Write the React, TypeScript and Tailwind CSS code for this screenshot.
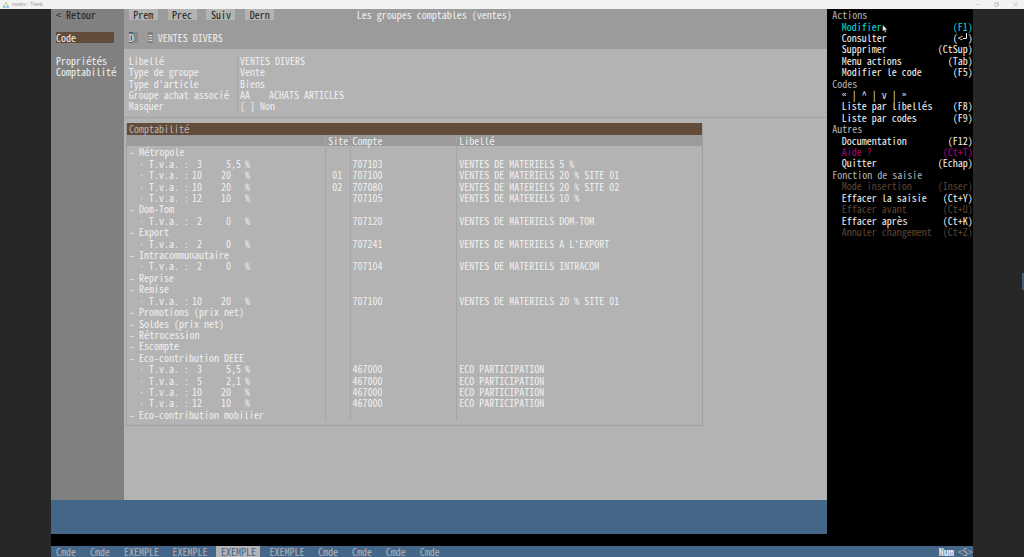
import React from "react";

type Line = {
  title?: string;
  code?: string;
  rate?: string;
  site?: string;
  account?: string;
  label?: string;
};

const lines: Line[] = [
  { title: "Métropole" },
  { code: "3", rate: " 5,5", account: "707103", label: "VENTES DE MATERIELS 5 %" },
  { code: "10", rate: "20", site: "01", account: "707100", label: "VENTES DE MATERIELS 20 % SITE 01" },
  { code: "10", rate: "20", site: "02", account: "707080", label: "VENTES DE MATERIELS 20 % SITE 02" },
  { code: "12", rate: "10", account: "707105", label: "VENTES DE MATERIELS 10 %" },
  { title: "Dom-Tom" },
  { code: "2", rate: " 0", account: "707120", label: "VENTES DE MATERIELS DOM-TOM" },
  { title: "Export" },
  { code: "2", rate: " 0", account: "707241", label: "VENTES DE MATERIELS A L'EXPORT" },
  { title: "Intracommunautaire" },
  { code: "2", rate: " 0", account: "707104", label: "VENTES DE MATERIELS INTRACOM" },
  { title: "Reprise" },
  { title: "Remise" },
  { code: "10", rate: "20", account: "707100", label: "VENTES DE MATERIELS 20 % SITE 01" },
  { title: "Promotions (prix net)" },
  { title: "Soldes (prix net)" },
  { title: "Rétrocession" },
  { title: "Escompte" },
  { title: "Eco-contribution DEEE" },
  { code: "3", rate: " 5,5", account: "467000", label: "ECO PARTICIPATION" },
  { code: "5", rate: " 2,1", account: "467000", label: "ECO PARTICIPATION" },
  { code: "10", rate: "20", account: "467000", label: "ECO PARTICIPATION" },
  { code: "12", rate: "10", account: "467000", label: "ECO PARTICIPATION" },
  { title: "Eco-contribution mobilier" },
];

const fields: [string, React.ReactNode][] = [
  ["Libellé", "VENTES DIVERS"],
  ["Type de groupe", "Vente"],
  ["Type d'article", "Biens"],
  [
    "Groupe achat associé",
    <span className="flex">
      <span className="w-[calc(var(--c)*6)]">AA</span>ACHATS ARTICLES
    </span>,
  ],
  ["Masquer", "[ ] Non"],
];

type Tone = "normal" | "active" | "help" | "off";

const tones: Record<Tone, string> = {
  normal: "text-[#f0f0f0]",
  active: "text-[#00dcd8]",
  help: "text-[#b80074]",
  off: "text-[#5a4435]",
};

function Action({ name, keys, tone = "normal" }: { name: string; keys: React.ReactNode; tone?: Tone }) {
  return (
    <button
      type="button"
      disabled={tone === "off"}
      className={`flex h-(--r) w-full items-center justify-between pl-[calc(var(--c)*3)] ${tones[tone]}`}
    >
      <span className="relative">
        {name}
        {tone === "active" && (
          <svg viewBox="0 0 10 14" className="absolute left-full top-1 h-2 w-1.5" aria-hidden="true">
            <path d="M1 0v11l2.6-2.4L5.6 13l1.8-.8-1.9-4.1H9z" fill="#fff" stroke="#222" strokeWidth=".6" />
          </svg>
        )}
      </span>
      <span>{keys}</span>
    </button>
  );
}

function Heading({ children }: { children: React.ReactNode }) {
  return <h2 className="flex h-(--r) items-center pl-(--c) text-[#b3b3b3]">{children}</h2>;
}

function Tab({ children, on = false }: { children: string; on?: boolean }) {
  const width = children === "Cmde" ? "w-[calc(var(--c)*7)]" : "w-[calc(var(--c)*10)]";
  return (
    <a
      href="#"
      className={`flex h-full items-center pl-(--c) ${width} ${on ? "text-[#446688]" : "text-[#b3b3b3]"}`}
    >
      {on ? (
        <span className="-ml-(--c) flex h-full w-[calc(var(--c)*9)] items-center bg-[#b3b3b3] pl-(--c)">
          {children}
        </span>
      ) : (
        children
      )}
    </a>
  );
}

export default function App() {
  return (
    <div className="relative flex min-h-screen flex-col bg-[#272727] font-['Noto_Sans_Mono_CJK_SC','Liberation_Mono',monospace] text-[10px] leading-[11px] whitespace-pre text-[#f0f0f0] [--c:calc(90vw/190)] [--r:max(11px,calc((100vh-9px)/48))]">
      <header className="flex h-[9px] items-center bg-[#f2f2f2] pr-1.5 pl-0.5 font-['Open_Sans',sans-serif] text-[5px] text-[#999]">
        <svg viewBox="0 0 14 14" className="mr-0.5 size-2" aria-hidden="true">
          <path d="M7 1l3 5H4z" fill="#e8cf70" />
          <path d="M4 6l3 6H1z" fill="#79c3cf" />
          <path d="M10 6l3 6H7z" fill="#86b8dd" />
        </svg>
        <span className="flex-1">twebv - Tweb</span>
        <span className="flex gap-3.5">
          <button type="button" aria-label="Réduire">
            <svg viewBox="0 0 5 5" className="size-[5px]" fill="none" stroke="#c4c4c4" strokeWidth=".6">
              <path d="M0 2.5h5" />
            </svg>
          </button>
          <button type="button" aria-label="Restaurer">
            <svg viewBox="0 0 5 5" className="size-[5px]" fill="none" stroke="#b4b4b4" strokeWidth=".6">
              <path d="M.4 1.4h3v3h-3zM1.4 1.2V.4h3.2v3.2h-1" />
            </svg>
          </button>
          <button type="button" aria-label="Fermer">
            <svg viewBox="0 0 5 5" className="size-[5px]" fill="none" stroke="#aaa" strokeWidth=".6">
              <path d="M.5.5l4 4M4.5.5l-4 4" />
            </svg>
          </button>
        </span>
      </header>

      <div className="mx-[5%] flex flex-1 flex-col bg-black">
        <div className="flex flex-1">
          <div className="flex flex-[160] flex-col">
            <div className="flex min-h-[calc(var(--r)*43)]">
              <nav className="w-[calc(var(--c)*15)] bg-[#808080] px-(--c)">
                <a href="#" className="flex h-(--r) items-center text-[#1c1c1c]">
                  {"< Retour"}
                </a>
                <a href="#" className="mt-(--r) flex h-(--r) w-[calc(var(--c)*12)] items-center bg-[#634b39]">
                  Code
                </a>
                <a href="#" className="mt-(--r) flex h-(--r) items-center">
                  Propriétés
                </a>
                <a href="#" className="flex h-(--r) items-center">
                  Comptabilité
                </a>
              </nav>

              <main className="flex-1 bg-[#b3b3b3]">
                <div className="h-[calc(var(--r)*3.5)] bg-[#9b9b9b] pl-(--c)">
                  <div className="flex h-(--r) items-center">
                    <div className="flex h-full w-[calc(var(--c)*47)] gap-[calc(var(--c)*2)]">
                      {["Prem", "Prec", "Suiv", "Dern"].map((name) => (
                        <button
                          key={name}
                          type="button"
                          className="h-full w-[calc(var(--c)*6)] bg-[#b3b3b3] text-[#1c1c1c]"
                        >
                          {name}
                        </button>
                      ))}
                    </div>
                    <h1>Les groupes comptables (ventes)</h1>
                  </div>
                  <div className="mt-(--r) flex h-(--r) items-center">
                    <input
                      aria-label="Code"
                      defaultValue="D"
                      className="h-full w-[calc(var(--c)*2)] bg-[linear-gradient(to_right,#446688_50%,#888888_50%)] outline-none"
                    />
                    <button
                      type="button"
                      aria-label="Liste"
                      className="mr-(--c) ml-[calc(var(--c)*2)] flex h-full w-(--c) items-center justify-center bg-[#808080]"
                    >
                      <svg viewBox="0 0 5 8" className="h-2 w-[5px]" stroke="#eee" strokeWidth=".9" aria-hidden="true">
                        <path d="M.5 1.5h4M.5 4h4M.5 6.5h4" />
                      </svg>
                    </button>
                    VENTES DIVERS
                  </div>
                </div>

                <dl className="mt-[calc(var(--r)/2)] pl-(--c)">
                  {fields.map(([name, value]) => (
                    <div key={name} className="flex h-(--r) items-center">
                      <dt className="flex h-full w-[calc(var(--c)*22.5)] items-center border-r border-[#a5a5a5]">
                        {name}
                      </dt>
                      <dd className="pl-0.5">{value}</dd>
                    </div>
                  ))}
                </dl>
                <hr className="mt-[calc(var(--r)/2)] border-[#a2a2a2]" />

                <section className="mt-[5px] ml-0.5 min-h-[calc(var(--r)*26.5)] w-[calc(var(--c)*119)] border border-t-0 border-[#a0a0a0]">
                  <table className="w-full table-fixed border-collapse text-left">
                    <caption className="h-(--r) bg-[#634b39] pl-0.5 text-left text-[#b3b3b3]">Comptabilité</caption>
                    <colgroup>
                      <col className="w-[calc(var(--c)*41)]" />
                      <col className="w-[calc(var(--c)*5)]" />
                      <col className="w-[calc(var(--c)*22)]" />
                      <col />
                    </colgroup>
                    <thead>
                      <tr className="h-(--r) bg-[#9b9b9b] [&>th]:border-r [&>th]:border-[#a5a5a5] [&>th]:p-0 [&>th]:pl-0.5 [&>th]:font-normal [&>th:last-child]:border-r-0">
                        <th />
                        <th>Site</th>
                        <th>Compte</th>
                        <th>Libellé</th>
                      </tr>
                    </thead>
                    <tbody>
                      {lines.map((line, i) => (
                        <tr
                          key={i}
                          className="h-(--r) [&>td]:border-r [&>td]:border-[#a5a5a5] [&>td]:p-0 [&>td]:pl-0.5 [&>td:last-child]:border-r-0"
                        >
                          <td>
                            {line.title ? (
                              `- ${line.title}`
                            ) : (
                              <div className="grid grid-cols-[10px_43px_10px_19px_24px_auto] pl-2.5">
                                <span className="pt-0.5 font-['Liberation_Mono',monospace] text-[8px] leading-[9px]">
                                  ·
                                </span>
                                <span>T.v.a. :</span>
                                <span className="text-right">{line.code}</span>
                                <span />
                                <span>{line.rate}</span>
                                <span>%</span>
                              </div>
                            )}
                          </td>
                          <td>
                            <div className="pl-1">{line.site}</div>
                          </td>
                          <td>{line.account}</td>
                          <td>{line.label}</td>
                        </tr>
                      ))}
                    </tbody>
                  </table>
                </section>
              </main>
            </div>
            <div className="h-[calc(var(--r)*3)] bg-[#446688]" />
          </div>

          <aside className="w-[calc(var(--c)*30)] bg-black">
            <Heading>Actions</Heading>
            <Action name="Modifier" keys="(F1)" tone="active" />
            <Action
              name="Consulter"
              keys={
                <span className="flex">
                  {"(<"}
                  <svg viewBox="0 0 5 11" className="h-[11px] w-[5px]" fill="none" stroke="currentColor" aria-hidden="true">
                    <path d="M0 6.5h3.5V1" />
                  </svg>
                  {")"}
                </span>
              }
            />
            <Action name="Supprimer" keys="(CtSup)" />
            <Action name="Menu actions" keys="(Tab)" />
            <Action name="Modifier le code" keys="(F5)" />
            <Heading>Codes</Heading>
            <div className="flex h-(--r) items-center pl-[calc(var(--c)*3)]">
              <button type="button" className="font-['Liberation_Mono',monospace] text-[8px]">
                «
              </button>
              {" | "}
              <button type="button">^</button>
              {" | "}
              <button type="button">v</button>
              {" | "}
              <button type="button" className="font-['Liberation_Mono',monospace] text-[8px]">
                »
              </button>
            </div>
            <Action name="Liste par libellés" keys="(F8)" />
            <Action name="Liste par codes" keys="(F9)" />
            <Heading>Autres</Heading>
            <Action name="Documentation" keys="(F12)" />
            <Action name="Aide ?" keys="(Ct+T)" tone="help" />
            <Action name="Quitter" keys="(Echap)" />
            <Heading>Fonction de saisie</Heading>
            <Action name="Mode insertion" keys="(Inser)" tone="off" />
            <Action name="Effacer la saisie" keys="(Ct+Y)" />
            <Action name="Effacer avant" keys="(Ct+U)" tone="off" />
            <Action name="Effacer après" keys="(Ct+K)" />
            <Action name="Annuler changement" keys="(Ct+Z)" tone="off" />
          </aside>
        </div>

        <footer className="mt-(--r) flex h-(--r) items-center bg-[#446688]">
          <Tab>Cmde</Tab>
          <Tab>Cmde</Tab>
          <Tab>EXEMPLE</Tab>
          <Tab>EXEMPLE</Tab>
          <Tab on>EXEMPLE</Tab>
          <Tab>EXEMPLE</Tab>
          <Tab>Cmde</Tab>
          <Tab>Cmde</Tab>
          <Tab>Cmde</Tab>
          <Tab>Cmde</Tab>
          <span className="ml-auto pr-1 font-bold">Num</span>
          <span className="text-[#b3b3b3]">{"<S>"}</span>
        </footer>
      </div>
      <div className="absolute right-0 top-[49%] h-[17px] w-0.5 bg-[#46597a]" />
    </div>
  );
}
